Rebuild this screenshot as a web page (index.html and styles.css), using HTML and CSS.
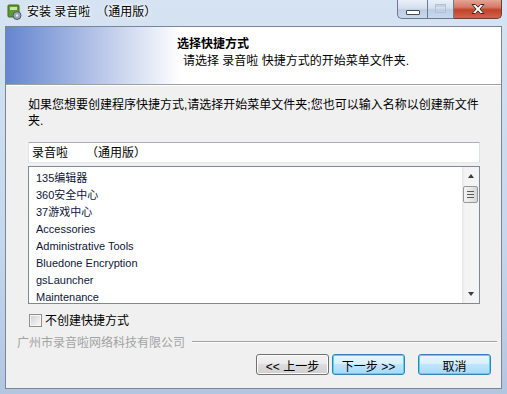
FILE: index.html
```html
<!DOCTYPE html>
<html lang="zh-CN">
  <head>
    <meta charset="UTF-8" />
    <meta name="viewport" content="width=device-width, initial-scale=1.0" />
    <title>安装 录音啦 （通用版）</title>
    <link rel="stylesheet" href="styles.css">
  </head>
  <body>
    <div class="window">
      <div class="titlebar">
        <svg class="app-icon" width="15" height="16" viewBox="0 0 15 16">
          <rect x="1" y="1" width="11" height="12" rx="1" fill="#5f9a2e" stroke="#3d6b1a" />
          <rect x="3" y="3" width="7" height="3" fill="#c9e6a0" />
          <circle cx="10" cy="11.5" r="4" fill="#9aa4b0" stroke="#4e5a68" />
          <circle cx="10" cy="11.5" r="1.2" fill="#e6ebf0" />
        </svg>
        <span class="title">安装 录音啦　（通用版）</span>
        <div class="caption-buttons">
          <div class="cap cap-min"><span class="min-glyph"></span></div>
          <div class="cap cap-max"><span class="max-glyph"></span></div>
          <div class="cap cap-close">
            <svg width="16" height="12" viewBox="0 0 16 12">
              <path d="M2 1.5 L5.5 1.5 L8 4.2 L10.5 1.5 L14 1.5 L9.9 6 L14 10.5 L10.5 10.5 L8 7.8 L5.5 10.5 L2 10.5 L6.1 6 Z" fill="#fff" stroke="#3c2a26" stroke-width="1" stroke-linejoin="round" />
            </svg>
          </div>
        </div>
      </div>

      <div class="client">
        <div class="header">
          <div class="header-title">选择快捷方式</div>
          <div class="header-sub">请选择 录音啦 快捷方式的开始菜单文件夹.</div>
        </div>

        <div class="page">
          <p class="intro">如果您想要创建程序快捷方式,请选择开始菜单文件夹;您也可以输入名称以创建新文件<br>夹.</p>

          <div class="folder-input">录音啦　　（通用版）</div>

          <div class="listbox">
            <ul class="folder-list">
              <li>135编辑器</li>
              <li>360安全中心</li>
              <li>37游戏中心</li>
              <li>Accessories</li>
              <li>Administrative Tools</li>
              <li>Bluedone Encryption</li>
              <li>gsLauncher</li>
              <li>Maintenance</li>
            </ul>
            <div class="scrollbar">
              <span class="arrow arrow-up"></span>
              <span class="thumb"><i></i><i></i><i></i></span>
              <span class="arrow arrow-down"></span>
            </div>
          </div>

          <label class="check-row">
            <span class="check-box"></span>
            <span class="check-label">不创建快捷方式</span>
          </label>
        </div>

        <div class="branding">
          <span class="brand-text">广州市录音啦网络科技有限公司</span>
          <span class="brand-line"></span>
        </div>

        <div class="actions">
          <button class="btn">&lt;&lt; 上一步</button>
          <button class="btn btn-default">下一步 &gt;&gt;</button>
          <button class="btn btn-cancel">取消</button>
        </div>
      </div>
    </div>
  </body>
</html>
```

FILE: styles.css
```css
body {
  margin: 0;
  font-family: "Liberation Sans", "Noto Sans CJK SC", sans-serif;
  font-size: 12px;
  color: #000;
}

.window {
  width: 507px;
  height: 394px;
  box-sizing: border-box;
  padding: 0 5px 5px;
  background: linear-gradient(to bottom, #d6e3f2 0, #c6d8ed 60%, #b3c6e0 100%);
  display: flex;
  flex-direction: column;
}

/* title bar */

.titlebar {
  height: 26px;
  display: flex;
  align-items: flex-start;
  position: relative;
}

.app-icon {
  margin: 4px 0 0 2px;
}

.title {
  margin: 5px 0 0 5px;
  line-height: 15px;
  white-space: pre;
  text-shadow: 0 0 6px #fff, 0 0 3px #fff;
}

.caption-buttons {
  position: absolute;
  top: 0;
  right: 0;
  display: flex;
}

.cap {
  height: 19px;
  box-sizing: border-box;
  border: 1px solid #6b7a90;
  border-top: none;
  display: flex;
  align-items: center;
  justify-content: center;
}

.cap-min {
  width: 30px;
  border-right: none;
  border-bottom-left-radius: 5px;
  background: linear-gradient(to bottom, #e9f0f8 0, #d5e0ee 45%, #bccde3 55%, #c9d9ec 100%);
}

.cap-max {
  width: 27px;
  background: linear-gradient(to bottom, #e9f0f8 0, #d5e0ee 45%, #bccde3 55%, #c9d9ec 100%);
}

.cap-close {
  width: 48px;
  border-left: none;
  border-color: #6d3a34;
  border-bottom-right-radius: 5px;
  background: linear-gradient(to bottom, #e5a497 0, #d47a67 40%, #c2412a 55%, #d2644b 100%);
}

.min-glyph {
  width: 12px;
  height: 3px;
  margin-top: 6px;
  background: #fff;
  border: 1px solid #3d4a5d;
  border-radius: 1px;
}

.max-glyph {
  width: 9px;
  height: 7px;
  margin-top: -2px;
  border: 1px solid #b3c1d3;
  box-shadow: inset 0 2px 0 #c5d2e2;
}

/* client area */

.client {
  flex: 1;
  border: 1px solid #77869b;
  background-color: #f0f0f0;
  display: flex;
  flex-direction: column;
}

.header {
  height: 58px;
  box-sizing: border-box;
  padding: 9px 0 0 171px;
  background: linear-gradient(to right, #6585cf 0, #ffffff 175px);
  border-bottom: 1px solid #a0a0a0;
  box-shadow: 0 1px 0 #fff;
}

.header-title {
  font-weight: bold;
  line-height: 16px;
}

.header-sub {
  padding-left: 6px;
  margin-top: 1px;
  line-height: 16px;
}

.page {
  padding: 12px 21px 0 22px;
}

.intro {
  margin: 0;
  line-height: 16px;
  white-space: nowrap;
}

.folder-input {
  margin-top: 13px;
  height: 21px;
  box-sizing: border-box;
  padding: 1px 3px 0;
  line-height: 19px;
  white-space: pre;
  background-color: #fff;
  border: 1px solid #e3e9ef;
  border-top-color: #abadb3;
  border-left-color: #e2e3ea;
  border-right-color: #dbdfe6;
}

.listbox {
  margin-top: 3px;
  height: 138px;
  box-sizing: border-box;
  border: 1px solid #828790;
  background-color: #fff;
  display: flex;
  overflow: hidden;
}

.folder-list {
  flex: 1;
  margin: 0;
  padding: 3px 0 0 7px;
  list-style: none;
  font-size: 11px;
  color: #0e1638;
}

.folder-list li {
  height: 17px;
  line-height: 17px;
  white-space: nowrap;
}

.scrollbar {
  width: 17px;
  background: linear-gradient(to right, #e6e6e6 0, #f4f4f4 3px, #f4f4f4 100%);
  display: flex;
  flex-direction: column;
  align-items: center;
}

.arrow {
  width: 0;
  height: 0;
  border-left: 3.5px solid transparent;
  border-right: 3.5px solid transparent;
}

.arrow-up {
  margin-top: 7px;
  border-bottom: 4px solid #3c3c3c;
}

.arrow-down {
  margin-top: auto;
  margin-bottom: 7px;
  border-top: 4px solid #3c3c3c;
}

.thumb {
  margin-top: 8px;
  width: 15px;
  height: 17px;
  box-sizing: border-box;
  border: 1px solid #979797;
  border-radius: 2px;
  background: linear-gradient(to right, #f3f3f3 0, #e8e8e8 50%, #d6d6d6 100%);
  display: flex;
  flex-direction: column;
  align-items: center;
  justify-content: center;
  gap: 2px;
}

.thumb i {
  width: 7px;
  height: 1px;
  background-color: #5b5b5b;
}

.check-row {
  margin: 10px 0 0 1px;
  height: 13px;
  display: flex;
  align-items: center;
  gap: 3px;
  line-height: 13px;
}

.check-label {
  padding-top: 2px;
}

.check-box {
  width: 13px;
  height: 13px;
  box-sizing: border-box;
  border: 1px solid #8f8f8f;
  background: linear-gradient(135deg, #cfcfcf 0, #f2f2f2 80%);
  box-shadow: inset 0 0 0 1px #f5f5f5;
}

/* branding line */

.branding {
  margin-top: 7px;
  height: 16px;
  padding: 0 4px 0 11px;
  display: flex;
  align-items: center;
  gap: 7px;
}

.brand-text {
  padding-top: 2px;
  color: #a3a3a3;
  line-height: 14px;
  white-space: nowrap;
}

.brand-line {
  flex: 1;
  height: 0;
  border-top: 1px solid #a0a0a0;
  border-bottom: 1px solid #fff;
}

/* buttons */

.actions {
  margin-top: 4px;
  padding-right: 10px;
  display: flex;
  justify-content: flex-end;
  gap: 3px;
}

.btn {
  width: 73px;
  height: 21px;
  padding: 1px 0 0;
  font: inherit;
  color: #000;
  border: 1px solid #707070;
  border-radius: 3px;
  background: linear-gradient(to bottom, #f2f2f2 0, #ebebeb 45%, #dddddd 50%, #cfcfcf 100%);
  box-shadow: inset 0 0 0 1px #fcfcfc;
}

.btn-default,
.btn-cancel {
  border-color: #3c7fb1;
  background: linear-gradient(to bottom, #eaf6fd 0, #d9f0fc 45%, #bee6fd 50%, #a7d9f5 100%);
  box-shadow: inset 0 0 0 1px #48d8fb;
}

.btn-cancel {
  margin-left: 10px;
}
```
